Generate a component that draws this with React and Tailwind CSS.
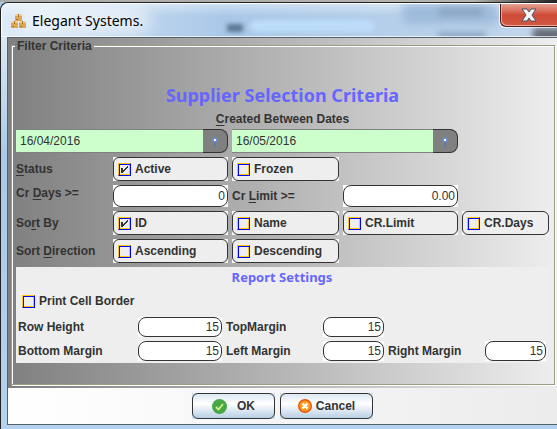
import React from "react";

const FONT = "font-['Liberation_Sans',Arial,sans-serif]";

function Label({ text, k, htmlFor, className = "" }) {
  const i = k ? text.indexOf(k) : -1;
  return (
    <label htmlFor={htmlFor} className={`whitespace-nowrap text-[12px] leading-4 font-bold text-[#333] ${className}`}>
      {i < 0 ? text : (
        <>
          {text.slice(0, i)}
          <span className="underline underline-offset-2">{k}</span>
          {text.slice(i + 1)}
        </>
      )}
    </label>
  );
}

function Tick({ id, checked }) {
  return (
    <span className="relative flex h-[13px] w-[13px] shrink-0">
      <input
        id={id}
        type="checkbox"
        defaultChecked={checked}
        className="peer h-[13px] w-[13px] appearance-none border border-t-[#ffc800] border-r-[#0000ff] border-b-[#0000ff] border-l-[#ffc800] bg-[#eee] shadow-[inset_1px_1px_0_#0000ff,inset_-1px_-1px_0_#ffc800]"
      />
      <svg viewBox="0 0 13 13" className="pointer-events-none absolute inset-0 hidden h-[13px] w-[13px] peer-checked:block" shapeRendering="crispEdges">
        <path d="M3 5h2v2h1V6h1V5h1V4h1V3h1v2H9v1H8v1H7v1H6v1H5v1H3z" fill="#333" />
      </svg>
    </span>
  );
}

function CheckCell({ id, text, checked, className = "" }) {
  return (
    <div className={`h-6 min-w-0 bg-[#f8f8f8] ${className}`}>
      <div className="flex h-full items-center gap-1 rounded-md border border-[#333] bg-[#eee] pl-1">
        <Tick id={id} checked={checked} />
        <Label text={text} htmlFor={id} />
      </div>
    </div>
  );
}

function NumberBox({ id, value, className = "" }) {
  return (
    <div className={`min-w-0 bg-white ${className}`}>
      <input id={id} defaultValue={value} className="block h-full w-full min-w-0 rounded-lg border border-[#333] bg-white pr-[2px] text-right text-[12px] text-[#333] outline-none" />
    </div>
  );
}

function DateBox({ label, value }) {
  return (
    <div className="col-span-2 flex h-6 min-w-0">
      <input aria-label={label} defaultValue={value} className="h-full min-w-0 flex-1 border-y border-[#808080] bg-[#ccffcc] pl-1 text-[12px] text-[#333] outline-none" />
      <button aria-label={`Choose ${label}`} className="flex h-full w-[25px] items-center justify-center rounded-r-lg border border-l-0 border-[#333] bg-[#808080]">
        <svg viewBox="0 0 8 11" className="h-[11px] w-2">
          <circle cx="4" cy="4" r="2.8" fill="#6c8fd0" />
          <path d="M4 6v5" stroke="#5577bb" strokeWidth="1.6" />
          <rect x="3" y="3" width="2" height="2" fill="#fff" />
        </svg>
      </button>
    </div>
  );
}

function Crate({ x, y }) {
  return (
    <g transform={`translate(${x} ${y})`}>
      <path d="M0 2l1-2h5l1 2v5H0z" fill="#dda752" />
      <path d="M0 2l1-2h5l1 2z" fill="#f3cf8d" />
      <path d="M3 0h1v3H3z" fill="#a86e2c" />
      <path d="M1 5h2v1H1z" fill="#a97535" />
    </g>
  );
}

function TitleBar() {
  return (
    <header className="relative flex h-[34px] items-start overflow-hidden rounded-tl-lg border-t border-l border-white bg-linear-to-r from-[#dfebf6] via-[#a9c8e8] via-40% to-[#c3d7ec]">
      <div className="absolute inset-x-0 top-0 h-3 bg-linear-to-b from-white/40 to-transparent" />
      <div className="absolute top-1 left-5 h-6 w-32 rounded-full bg-white/60 blur-sm" />
      <div className="absolute top-0 left-[400px] h-5 w-24 rounded-md bg-[#9dbbdb] blur-xs" />
      <div className="absolute top-4 left-[248px] h-3 w-[124px] rounded-md bg-[#bcdcfa] blur-[2px]" />
      <div className="absolute top-5 left-[225px] h-2 w-4 bg-[#5b7997] blur-[2px]" />
      <div className="absolute top-1 left-[437px] h-2 w-11 bg-[#8aa6c3] blur-[3px]" />
      <div className="absolute top-7 left-[436px] h-2 w-12 bg-[#8aa6c3] blur-[3px]" />
      <div className="absolute top-6 -right-2 h-4 w-8 bg-[#676c76] blur-[3px]" />
      <div className="absolute inset-x-0 bottom-0 h-px bg-white/70" />
      <svg viewBox="0 0 15 14" className="relative mt-[10px] ml-[9px] h-[14px] w-[15px]">
        <Crate x={4} y={0} />
        <Crate x={0} y={7} />
        <Crate x={8} y={7} />
      </svg>
      <h1 className="relative mt-[7px] ml-[6px] font-['Noto_Sans','Open_Sans',sans-serif] text-[14px] leading-5 text-black">Elegant Systems.</h1>
      <button aria-label="Close" className="relative ml-auto flex h-[23px] w-[57px] items-center justify-center rounded-bl-md border border-t-0 border-r-0 border-[#4b1d1d] bg-linear-to-b from-[#e3a193] via-[#cf4a37] via-50% to-[#cf5a44] shadow-[inset_1px_-1px_0_#efa796,-1px_1px_0_#ffffffb0]">
        <svg viewBox="0 0 16 14" className="h-[14px] w-4">
          <path d="M1 1h5l2 3 2-3h5l-4 6 4 6h-5l-2-3-2 3H1l4-6z" fill="#f4f4f4" stroke="#4c5366" strokeLinejoin="round" />
        </svg>
      </button>
    </header>
  );
}

function ActionButton({ icon, text, className }) {
  return (
    <div className="bg-[#cfdfee]">
      <button className={`flex h-[26px] items-center justify-center rounded-md border border-[#333] bg-linear-to-b from-[#dce8f3] via-white via-40% to-[#b8cfe5] text-[12px] leading-4 font-bold text-[#333] ${className}`}>
        {icon}
        {text}
      </button>
    </div>
  );
}

export default function App() {
  return (
    <div className={`bg-[#a9c9ea] ${FONT}`}>
      <div className="h-[2px] bg-linear-to-r from-[#aaa] via-[#b5b5b0] via-85% to-[#222]" />
      <div className="rounded-tl-lg border-t border-l border-[#222]">
        <TitleBar />
        <div className="bg-linear-to-b from-[#dce9f5] via-[#a9c9ea] via-30% to-[#b5d3f0] pb-1 pl-[6px]">
          <main className="border-y border-l border-[#56616e]">
            <section className="bg-linear-to-r from-[#808080] to-[#eeeeee] pt-px pb-[3px] pl-[3px]">
              <div className="relative mt-[6px] mr-[2px] border border-[#9c9c80] shadow-[inset_1px_1px_0_#fff,1px_1px_0_#fff]">
                <h2 className="absolute -top-2 left-[3px] bg-linear-to-r from-[#818181] to-[#909090] px-[2px] text-[12px] leading-4 font-bold text-[#333]">Filter Criteria</h2>
                <div className="pt-[37px] pr-[5px] pb-[21px] pl-1">
                  <h3 className="text-center font-['Noto_Sans','Open_Sans',sans-serif] text-[18px] leading-6 font-bold text-[#6666ff]">Supplier Selection Criteria</h3>
                  <p className="pt-1 pb-[2px] text-center text-[12px] leading-4 font-bold text-[#333]"><span className="underline underline-offset-2">C</span>reated Between Dates</p>
                  <div className="grid grid-cols-[93fr_115fr_107fr_115fr_87fr] items-center gap-1">
                    <DateBox label="start date" value="16/04/2016" />
                    <DateBox label="end date" value="16/05/2016" />
                    <span />
                    <Label text="Status" k="S" htmlFor="active" />
                    <CheckCell id="active" text="Active" checked />
                    <CheckCell id="frozen" text="Frozen" className="col-end-4" />
                    <Label text="Cr Days >=" k="D" htmlFor="crdays" className="col-start-1 self-start" />
                    <NumberBox id="crdays" value="0" className="h-[22px]" />
                    <Label text="Cr Limit >=" k="L" htmlFor="crlimit" />
                    <NumberBox id="crlimit" value="0.00" className="h-[22px]" />
                    <Label text="Sort By" k="r" htmlFor="byid" className="col-start-1" />
                    <CheckCell id="byid" text="ID" checked />
                    <CheckCell id="byname" text="Name" />
                    <CheckCell id="bylimit" text="CR.Limit" />
                    <CheckCell id="bydays" text="CR.Days" />
                    <Label text="Sort Direction" k="D" htmlFor="asc" />
                    <CheckCell id="asc" text="Ascending" />
                    <CheckCell id="desc" text="Descending" />
                  </div>
                  <div className="mt-1 bg-[#eee] pr-[3px] pb-[2px] pl-[2px]">
                    <h3 className="text-center font-['Noto_Sans','Open_Sans',sans-serif] text-[13px] leading-5 font-bold text-[#6666ff]">Report Settings</h3>
                    <div className="mt-[6px] flex h-4 items-center gap-1 pl-1">
                      <Tick id="cellborder" />
                      <Label text="Print Cell Border" htmlFor="cellborder" />
                    </div>
                    <div className="mt-2 grid grid-cols-[116fr_84fr_93fr_61fr_93fr_61fr] items-center gap-1">
                      <Label text="Row Height" htmlFor="rowheight" />
                      <NumberBox id="rowheight" value="15" className="h-5" />
                      <Label text="TopMargin" htmlFor="top" />
                      <NumberBox id="top" value="15" className="h-5" />
                      <Label text="Bottom Margin" htmlFor="bottom" className="col-start-1" />
                      <NumberBox id="bottom" value="15" className="h-5" />
                      <Label text="Left Margin" htmlFor="left" />
                      <NumberBox id="left" value="15" className="h-5" />
                      <Label text="Right Margin" htmlFor="right" />
                      <NumberBox id="right" value="15" className="h-5" />
                    </div>
                  </div>
                </div>
              </div>
            </section>
            <footer className="flex justify-center gap-[5px] bg-linear-to-r from-white to-[#ececec] pt-[5px] pb-[5px]">
              <ActionButton
                className="w-[83px] gap-[10px]"
                text="OK"
                icon={
                  <svg viewBox="0 0 15 15" className="h-[15px] w-[15px]">
                    <circle cx="7.5" cy="7.5" r="7.5" fill="#46a945" />
                    <path d="M4 8l2.5 2.5L11 5" fill="none" stroke="#d8f08a" strokeWidth="1.8" />
                  </svg>
                }
              />
              <ActionButton
                className="w-[93px] gap-1"
                text="Cancel"
                icon={
                  <svg viewBox="0 0 14 14" className="h-[14px] w-[14px]">
                    <circle cx="7" cy="7" r="6.3" fill="#ff9a1a" stroke="#e8540c" strokeWidth="1.4" />
                    <path d="M4.5 4.5l5 5m0-5l-5 5" stroke="#fff" strokeWidth="2.4" />
                  </svg>
                }
              />
            </footer>
          </main>
        </div>
      </div>
    </div>
  );
}
